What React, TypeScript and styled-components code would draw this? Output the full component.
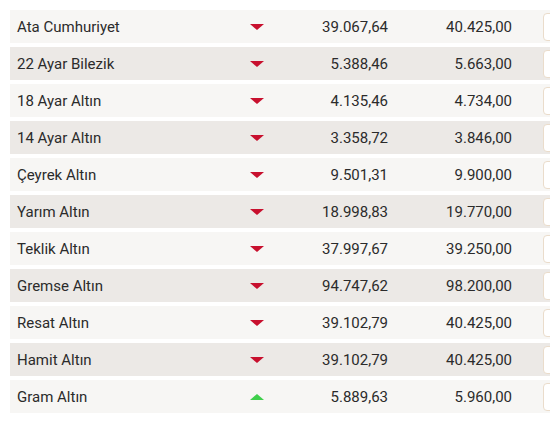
import React from "react";
import styled, { createGlobalStyle } from "styled-components";

const GlobalStyle = createGlobalStyle`
  body {
    margin: 0;
    background: #ffffff;
    font-family: Roboto, "Liberation Sans", sans-serif;
  }
`;

const Table = styled.div`
  display: flex;
  flex-direction: column;
  gap: 4px;
  padding: 10px 0 0 10px;
  width: 560px;
  overflow: hidden;
`;

const Row = styled.div<{ $alt: boolean }>`
  display: grid;
  grid-template-columns: 225px 44px 109px 124px 1fr;
  align-items: center;
  height: 33px;
  background: ${(p) => (p.$alt ? "#ece9e6" : "#f7f6f4")};
  color: #2b2b2b;
  font-size: 15px;
`;

const Name = styled.div`
  padding-left: 7px;
`;

// red = fell, green = rose
const Arrow = styled.div<{ $up: boolean }>`
  width: 0;
  height: 0;
  justify-self: center;
  border-left: 7px solid transparent;
  border-right: 7px solid transparent;
  ${(p) =>
    p.$up
      ? "border-bottom: 6px solid #3fcf4b;"
      : "border-top: 6px solid #c8102e;"}
`;

const Price = styled.div`
  text-align: right;
`;

const Action = styled.button`
  justify-self: start;
  margin-left: 31px;
  width: 40px;
  height: 28px;
  background: #ffffff;
  border: 1px solid #eadccb;
  border-radius: 4px;
`;

const rows = [
  { name: "Ata Cumhuriyet", buy: "39.067,64", sell: "40.425,00", up: false },
  { name: "22 Ayar Bilezik", buy: "5.388,46", sell: "5.663,00", up: false },
  { name: "18 Ayar Altın", buy: "4.135,46", sell: "4.734,00", up: false },
  { name: "14 Ayar Altın", buy: "3.358,72", sell: "3.846,00", up: false },
  { name: "Çeyrek Altın", buy: "9.501,31", sell: "9.900,00", up: false },
  { name: "Yarım Altın", buy: "18.998,83", sell: "19.770,00", up: false },
  { name: "Teklik Altın", buy: "37.997,67", sell: "39.250,00", up: false },
  { name: "Gremse Altın", buy: "94.747,62", sell: "98.200,00", up: false },
  { name: "Resat Altın", buy: "39.102,79", sell: "40.425,00", up: false },
  { name: "Hamit Altın", buy: "39.102,79", sell: "40.425,00", up: false },
  { name: "Gram Altın", buy: "5.889,63", sell: "5.960,00", up: true },
];

export default function App() {
  return (
    <>
      <GlobalStyle />
      <Table>
        {rows.map((r, i) => (
          <Row key={r.name} $alt={i % 2 === 1}>
            <Name>{r.name}</Name>
            <Arrow $up={r.up} />
            <Price>{r.buy}</Price>
            <Price>{r.sell}</Price>
            <Action />
          </Row>
        ))}
      </Table>
    </>
  );
}
